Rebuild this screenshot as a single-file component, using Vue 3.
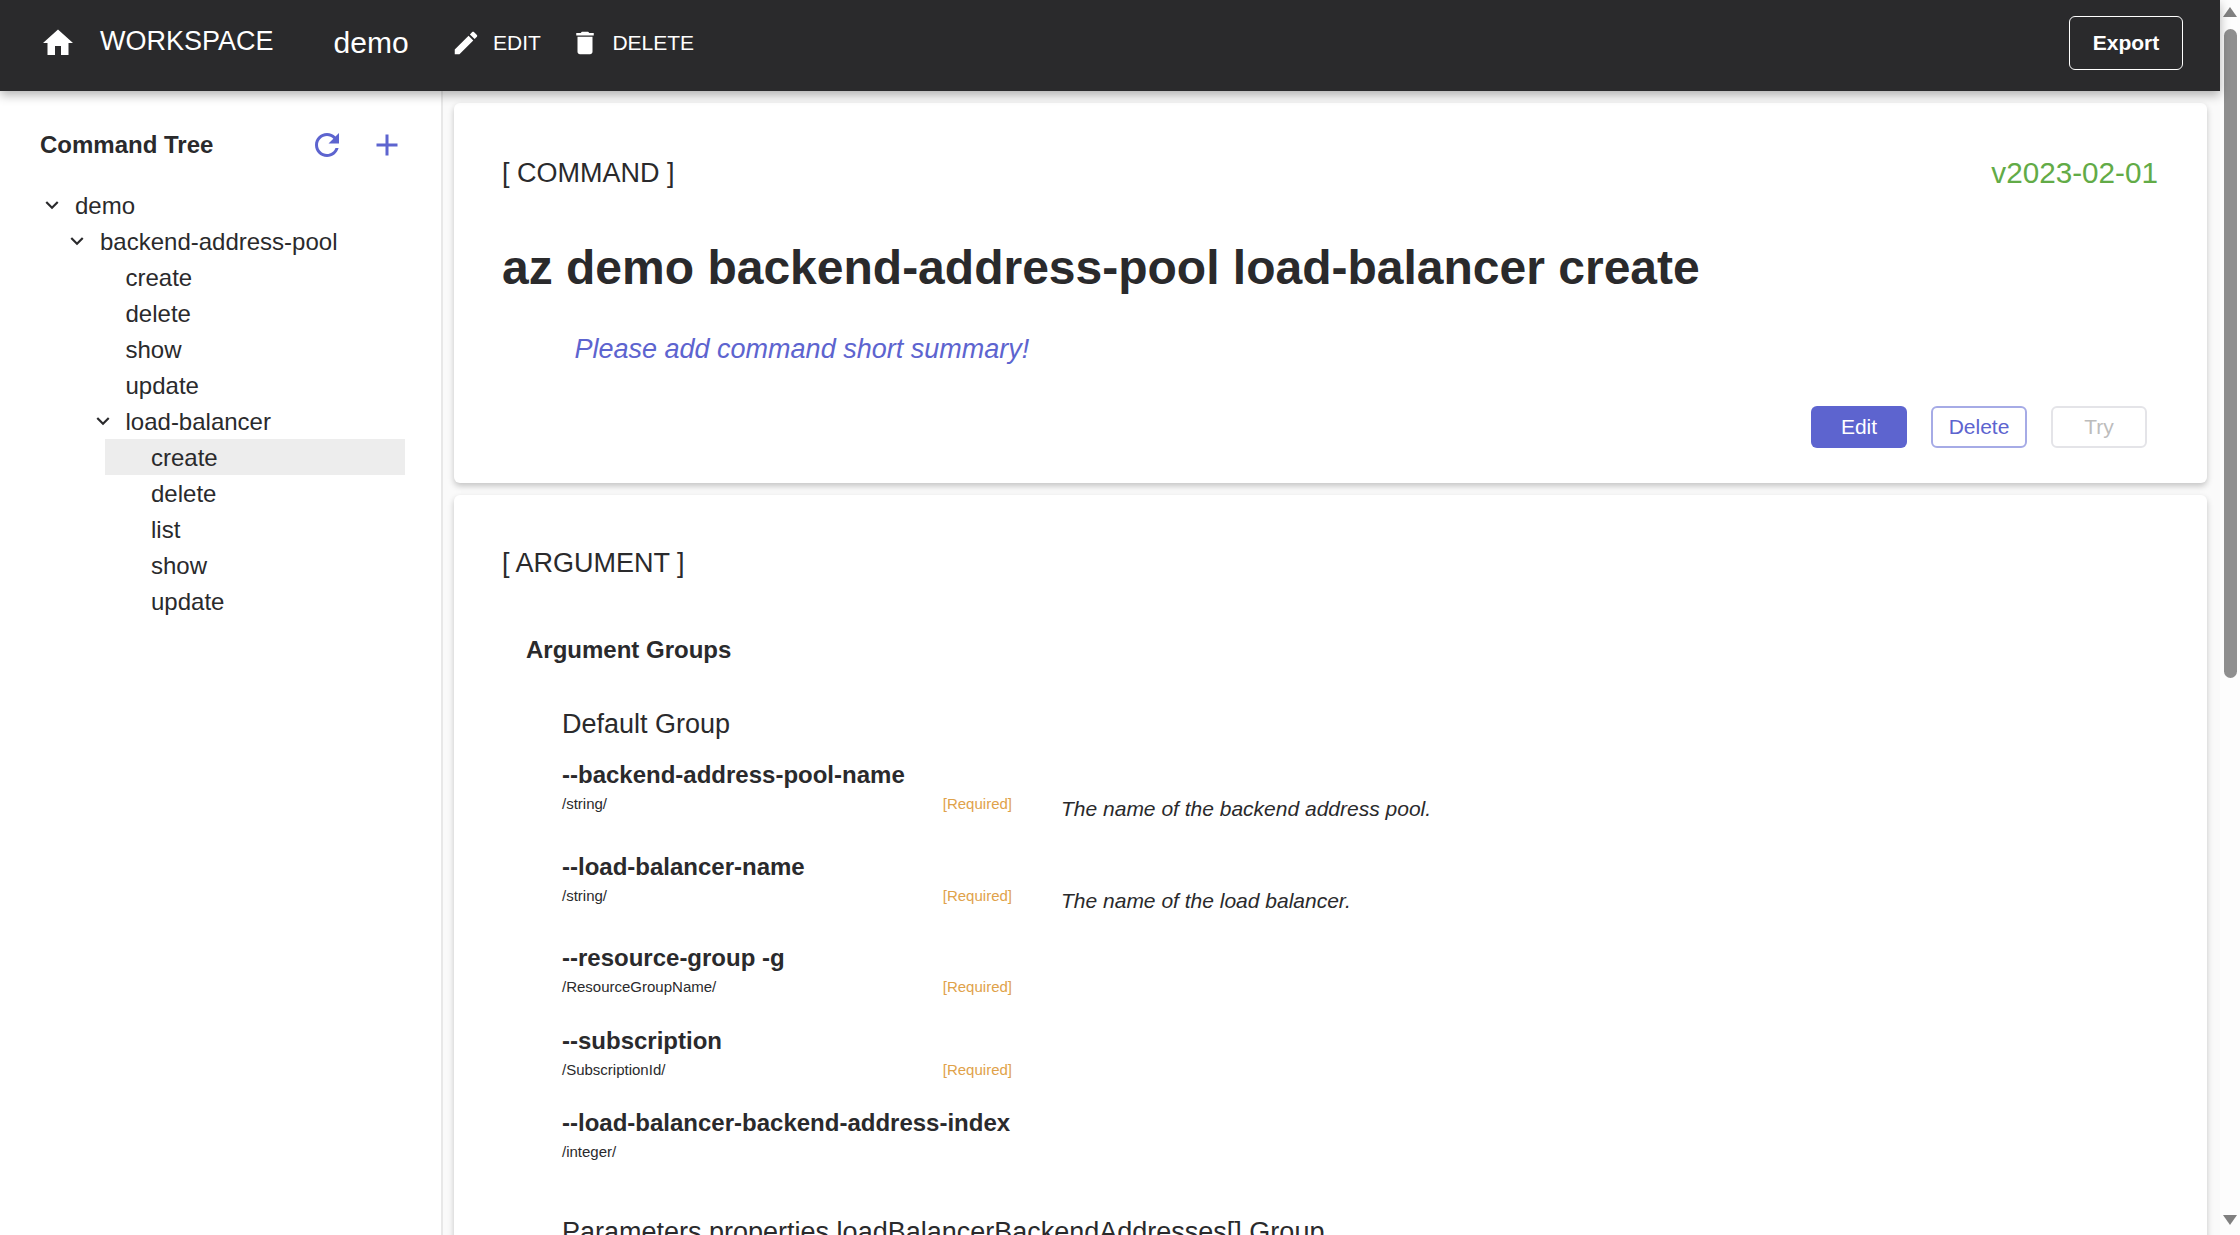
<script setup>
const tree = [
  { label: 'demo', depth: 0, open: true },
  { label: 'backend-address-pool', depth: 1, open: true },
  { label: 'create', depth: 2 },
  { label: 'delete', depth: 2 },
  { label: 'show', depth: 2 },
  { label: 'update', depth: 2 },
  { label: 'load-balancer', depth: 2, open: true },
  { label: 'create', depth: 3, selected: true },
  { label: 'delete', depth: 3 },
  { label: 'list', depth: 3 },
  { label: 'show', depth: 3 },
  { label: 'update', depth: 3 }
]
const args = [
  { name: '--backend-address-pool-name', type: '/string/', required: true, desc: 'The name of the backend address pool.' },
  { name: '--load-balancer-name', type: '/string/', required: true, desc: 'The name of the load balancer.' },
  { name: '--resource-group -g', type: '/ResourceGroupName/', required: true },
  { name: '--subscription', type: '/SubscriptionId/', required: true },
  { name: '--load-balancer-backend-address-index', type: '/integer/' }
]
</script>

<template>
  <div class="page">
    <div class="window">
      <header class="bar">
        <svg class="home" viewBox="0 0 24 24"><path d="M10 20v-6h4v6h5v-8h3L12 3 2 12h3v8z" /></svg>
        <span class="brand">WORKSPACE</span>
        <span class="ws">demo</span>
        <svg class="tool edit-ic" viewBox="0 0 24 24"><path d="M3 17.25V21h3.75L17.81 9.94l-3.75-3.75L3 17.25zM20.71 7.04c.39-.39.39-1.02 0-1.41l-2.34-2.34c-.39-.39-1.02-.39-1.41 0l-1.83 1.83 3.75 3.75 1.83-1.83z" /></svg>
        <span class="tool-label">EDIT</span>
        <svg class="tool del-ic" viewBox="0 0 24 24"><path d="M6 19c0 1.1.9 2 2 2h8c1.1 0 2-.9 2-2V7H6v12zM19 4h-3.5l-1-1h-5l-1 1H5v2h14V4z" /></svg>
        <span class="tool-label">DELETE</span>
        <button class="export">Export</button>
      </header>
      <div class="body">
        <aside class="side">
          <div class="side-head">
            <span class="side-title">Command Tree</span>
            <svg class="side-ic refresh" viewBox="0 0 24 24"><path d="M17.65 6.35C16.2 4.9 14.21 4 12 4c-4.42 0-7.99 3.58-7.99 8s3.57 8 7.99 8c3.73 0 6.84-2.55 7.73-6h-2.08c-.82 2.33-3.04 4-5.65 4-3.31 0-6-2.69-6-6s2.69-6 6-6c1.66 0 3.14.69 4.22 1.78L13 11h7V4l-2.35 2.35z" /></svg>
            <svg class="side-ic plus" viewBox="0 0 24 24"><path d="M19 13h-6v6h-2v-6H5v-2h6V5h2v6h6v2z" /></svg>
          </div>
          <ul class="tree">
            <li
              v-for="(n, i) in tree"
              :key="i"
              class="node"
              :class="[`d${n.depth}`, { selected: n.selected }]"
            >
              <svg v-if="n.open" class="chev" viewBox="0 0 24 24"><path d="M16.59 8.59 12 13.17 7.41 8.59 6 10l6 6 6-6z" /></svg>
              <span class="node-label">{{ n.label }}</span>
            </li>
          </ul>
        </aside>
        <main class="main">
          <section class="card cmd">
            <div class="cmd-top">
              <span class="section">[ COMMAND ]</span>
              <span class="version">v2023-02-01</span>
            </div>
            <h1 class="title">az demo backend-address-pool load-balancer create</h1>
            <p class="summary">Please add command short summary!</p>
            <div class="actions">
              <button class="btn primary">Edit</button>
              <button class="btn outline">Delete</button>
              <button class="btn disabled">Try</button>
            </div>
          </section>
          <section class="card arg-card">
            <div class="section">[ ARGUMENT ]</div>
            <div class="groups-title">Argument Groups</div>
            <div class="group-title first">Default Group</div>
            <div
              v-for="a in args"
              :key="a.name"
              class="arg"
              :class="{ 'with-desc': a.desc }"
            >
              <div class="arg-left">
                <div class="arg-name">{{ a.name }}</div>
                <div class="arg-meta">
                  <span>{{ a.type }}</span>
                  <span v-if="a.required" class="req">[Required]</span>
                </div>
              </div>
              <div v-if="a.desc" class="arg-desc">{{ a.desc }}</div>
            </div>
            <div class="group-title next">Parameters properties loadBalancerBackendAddresses[] Group</div>
          </section>
        </main>
      </div>
    </div>
    <div class="scrollbar">
      <i class="arrow up"></i>
      <i class="thumb"></i>
      <i class="arrow down"></i>
    </div>
  </div>
</template>

<style>
html, body { margin: 0; height: 100%; overflow: hidden; }
</style>

<style scoped>
.page {
  display: flex;
  height: 1235px;
  overflow: hidden;
  background: #fff;
  color: #2a2a2c;
  font-family: "Liberation Sans", Arial, sans-serif;
}
.window { flex: 1; min-width: 0; display: flex; flex-direction: column; }
.bar {
  position: relative;
  z-index: 2;
  flex: none;
  box-sizing: border-box;
  height: 91px;
  padding: 0 37px 5px 40px;
  display: flex;
  align-items: center;
  background: #2a2a2c;
  color: #fff;
  box-shadow: 0 4px 10px rgba(0, 0, 0, .3);
}
.home { width: 36px; height: 36px; fill: #fff; flex: none; }
.brand { font-size: 27px; margin: -3px 0 0 24px; }
.ws { font-size: 30px; margin-left: 60px; }
.tool { width: 30px; height: 30px; fill: #fff; flex: none; }
.edit-ic { margin-left: 42.5px; }
.del-ic { margin-left: 29.5px; }
.tool-label { font-size: 21px; margin-left: 12px; }
.export {
  margin-left: auto;
  width: 114px;
  height: 54px;
  box-sizing: border-box;
  background: transparent;
  border: 1.5px solid #fff;
  border-radius: 6px;
  color: #fff;
  font: bold 21px "Liberation Sans", Arial, sans-serif;
}
.body { flex: 1; min-height: 0; display: flex; }
.side {
  flex: none;
  box-sizing: border-box;
  width: 443px;
  border-right: 2px solid #e8e8e8;
  padding: 36px 36px 0 40px;
}
.side-head { display: flex; align-items: center; height: 36px; }
.side-title { font-size: 24px; font-weight: bold; flex: 1; }
.side-ic { width: 36px; height: 36px; fill: #5d64cf; flex: none; }
.plus { margin-left: 24px; }
.tree { list-style: none; margin: 24px 0 0; padding: 0; }
.node {
  position: relative;
  height: 36px;
  line-height: 37px;
  font-size: 24px;
  white-space: nowrap;
}
.d0 { padding-left: 35px; margin-left: 0; }
.d1 { padding-left: 60px; }
.d2 { padding-left: 85.5px; }
.d3 { padding-left: 111px; }
.selected { background: #ededed; margin-left: 65px; padding-left: 46px; }
.chev {
  position: absolute;
  width: 26px;
  height: 26px;
  top: 5px;
  fill: #2a2a2c;
}
.d0 .chev { left: -1px; }
.d1 .chev { left: 24px; }
.d2 .chev { left: 50px; }
.main {
  flex: 1;
  min-width: 0;
  background: #fafafa;
  padding: 12px 13px 0 11px;
  overflow: hidden;
}
.card {
  background: #fff;
  border-radius: 6px;
  box-shadow: 0 3px 6px rgba(0, 0, 0, .22);
}
.cmd {
  box-sizing: border-box;
  height: 380px;
  padding: 48px 49px 0 48px;
  margin-bottom: 12px;
}
.cmd-top { display: flex; justify-content: space-between; align-items: center; height: 44px; }
.section { font-size: 27px; line-height: 44px; }
.version { font-size: 29.7px; color: #62ab47; }
.title {
  margin: 43px 0 0;
  font-size: 48px;
  line-height: 60px;
  font-weight: bold;
}
.summary {
  margin: 32.5px 0 0 72.5px;
  font-size: 27px;
  line-height: 36px;
  font-style: italic;
  color: #5d64cf;
}
.actions { display: flex; gap: 24px; justify-content: flex-end; margin: 39.5px 11px 0 0; }
.btn {
  width: 96px;
  height: 42px;
  box-sizing: border-box;
  border-radius: 6px;
  font: 21px "Liberation Sans", Arial, sans-serif;
  background: #fff;
  padding: 0;
}
.primary { background: #5d64cf; border: 0; color: #fff; }
.outline { border: 2px solid #a6abe6; color: #5d64cf; }
.disabled { border: 2px solid #e4e4e8; color: #bcbcbc; }
.arg-card { padding: 46px 48px 0; height: 760px; overflow: hidden; }
.groups-title { font-size: 24px; font-weight: bold; margin: 46.5px 0 0 24px; line-height: 36px; }
.group-title { font-size: 27px; line-height: 40px; margin: 36.5px 0 0 60px; }
.group-title.first { margin-bottom: 13px; }
.arg { display: flex; margin-left: 60px; }
.arg-left { width: 450px; flex: none; padding-bottom: 25.5px; }
.with-desc .arg-left { padding-bottom: 34.5px; }
.arg-name { font-size: 24px; font-weight: bold; line-height: 36px; }
.arg-meta {
  display: flex;
  justify-content: space-between;
  margin-top: 1px;
  font-size: 15px;
  line-height: 20px;
}
.req { color: #dfa24a; }
.arg-desc { font-size: 21px; font-style: italic; margin: 38px 0 0 49px; line-height: 28px; }
.group-title.next { margin-top: 24px; white-space: nowrap; }
.scrollbar {
  flex: none;
  width: 20px;
  position: relative;
  background: #fdfdfd;
}
.thumb {
  position: absolute;
  left: 4px;
  top: 29px;
  width: 13px;
  height: 649px;
  border-radius: 6.5px;
  background: #8f8f8f;
}
.arrow {
  position: absolute;
  left: 3px;
  width: 0;
  height: 0;
  border-left: 7.5px solid transparent;
  border-right: 7.5px solid transparent;
}
.up { top: 7px; border-bottom: 10px solid #808080; }
.down { top: 1215px; border-top: 10px solid #808080; }
</style>
